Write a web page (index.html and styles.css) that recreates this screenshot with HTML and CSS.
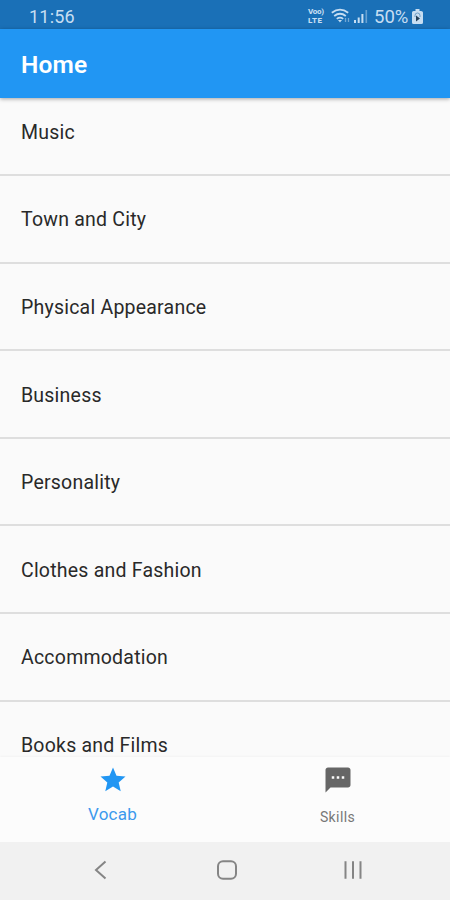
FILE: index.html
```html
<!DOCTYPE html>
<html lang="en">
<head>
<meta charset="utf-8">
<title>Home</title>
<link rel="stylesheet" href="styles.css">
</head>
<body>
<div class="app">
  <div class="status">
    <span class="clock">11:56</span>
    <div class="indicators">
      <div class="volte"><span>Voo)</span><span class="lte">LTE</span></div>
      <svg class="wifi" width="20" height="16" viewBox="0 0 20 16" fill="none" stroke="currentColor" stroke-width="1.800">
        <path d="M.8 4.800Q9 -1.500 17.200 4.800M3.200 8Q9 3.500 14.800 8M5.800 10.900Q9 8.400 12.200 10.900"/>
        <path d="M7 12h4l-2 2.500z" fill="currentColor" stroke="none"/>
        <path d="M14.500 10v4M17.500 10v4" stroke-width="1.300" opacity=".5"/>
      </svg>
      <svg class="signal" width="14" height="14" viewBox="0 0 14 14" fill="currentColor">
        <path d="M0 11h2v3H0zM3.700 8.500h2V14h-2zM7.400 5h2v9h-2z"/><path d="M11.500 1h1.600v13h-1.600z" opacity=".45"/>
      </svg>
      <span class="percent">50%</span>
      <svg class="battery" width="11" height="15" viewBox="0 0 11 15">
        <path d="M3.500 0h4v2h1.500Q11 2 11 3.500v10Q11 15 9.500 15h-8Q0 15 0 13.500v-10Q0 2 1.500 2h2z" fill="currentColor"/>
        <path d="M3 8V6.500a2.500 2.500 0 0 1 5 0V8" fill="none" stroke="#6d9cc4"/>
        <path d="M4 6.500L8 9.500l-4 3z" fill="#233f58"/>
      </svg>
    </div>
  </div>
  <header class="bar"><h1>Home</h1></header>
  <main class="list">
    <div class="row">Music</div>
    <div class="row">Town and City</div>
    <div class="row">Physical Appearance</div>
    <div class="row">Business</div>
    <div class="row">Personality</div>
    <div class="row">Clothes and Fashion</div>
    <div class="row">Accommodation</div>
    <div class="row">Books and Films</div>
  </main>
  <nav class="tabs">
    <div class="tab active">
      <svg width="30" height="30" viewBox="0 0 24 24" fill="currentColor"><path d="M12 17.270L18.180 21l-1.640-7.030L22 9.240l-7.190-.61L12 2 9.190 8.630 2 9.240l5.460 4.730L5.820 21z"/></svg>
      <span>Vocab</span>
    </div>
    <div class="tab">
      <svg width="30" height="30" viewBox="0 0 24 24" fill="currentColor"><path d="M20 2H4c-1.100 0-1.990.9-1.990 2L2 22l4-4h14c1.100 0 2-.9 2-2V4c0-1.100-.9-2-2-2zM9 11H7V9h2v2zm4 0h-2V9h2v2zm4 0h-2V9h2v2z"/></svg>
      <span>Skills</span>
    </div>
  </nav>
  <div class="system">
    <svg width="24" height="24" viewBox="0 0 24 24"><path d="M16.500 3.500L7 12l9.500 8.500"/></svg>
    <svg width="24" height="24" viewBox="0 0 24 24"><rect x="3" y="3.200" width="18" height="17.600" rx="5"/></svg>
    <svg width="24" height="24" viewBox="0 0 24 24"><path d="M4.500 3.300v17.400M12 3.300v17.400M19.500 3.300v17.400"/></svg>
  </div>
</div>
</body>
</html>
```
FILE: styles.css
```css
* { box-sizing: border-box; }
body { margin: 0; font-family: Roboto, sans-serif; background: #fafafa; }
.app { width: 450px; height: 900px; display: flex; flex-direction: column; overflow: hidden; }
.status {
  height: 29px; flex: none; display: flex; justify-content: space-between; align-items: center;
  padding: 3px 27px 0 29px; background: #1a70b7; color: #c7def2;
}
.clock { font-size: 18px; letter-spacing: 0.2px; }
.indicators { display: flex; align-items: center; }
.volte { display: flex; flex-direction: column; font-size: 8px; line-height: 9px; font-weight: 800; width: 17px; letter-spacing: -0.3px; }
.volte .lte { letter-spacing: 0.5px; }
.wifi { margin-left: 6px; }
.signal { margin-left: 3px; }
.percent { font-size: 18.5px; line-height: 22px; padding-top: 1px; margin-left: 6px; width: 35px; }
.battery { margin-left: 3px; }
.bar {
  height: 68.5px; flex: none; display: flex; align-items: center; padding: 4px 21px 0;
  background: #2196f3; z-index: 1; box-shadow: 0 1px 4px rgba(0, 0, 0, 0.35);
}
h1 { margin: 0; font-size: 24.5px; line-height: 28px; font-weight: 600; letter-spacing: 0.2px; color: #fff; }
.list { flex: 1; min-height: 0; overflow: hidden; display: flex; flex-direction: column; }
.row {
  height: 87.6px; flex: none; display: flex; align-items: center; padding: 2px 21px 0;
  border-bottom: 2px solid #dedede; font-size: 19.5px; letter-spacing: 0.22px; color: #292929;
}
.row:first-child { margin-top: -9px; }
.tabs { height: 85px; flex: none; display: flex; background: #fcfcfc; box-shadow: 0 -1px 2px rgba(0, 0, 0, 0.03); z-index: 1; }
.tab { flex: 1; display: flex; flex-direction: column; align-items: center; padding-top: 8px; color: #666; font-size: 14px; letter-spacing: 0.4px; }
.tab span { line-height: 20px; margin-top: 12px; color: #777; }
.tab.active { color: #2196f3; font-size: 17px; }
.tab.active span { margin-top: 9px; letter-spacing: 0.25px; color: #3c99ed; }
.system { height: 58px; flex: none; display: flex; align-items: center; justify-content: space-between; padding: 0 85px 2px 89px; background: #f1f1f1; }
.system svg { fill: none; stroke: #858585; stroke-width: 2; }
```
